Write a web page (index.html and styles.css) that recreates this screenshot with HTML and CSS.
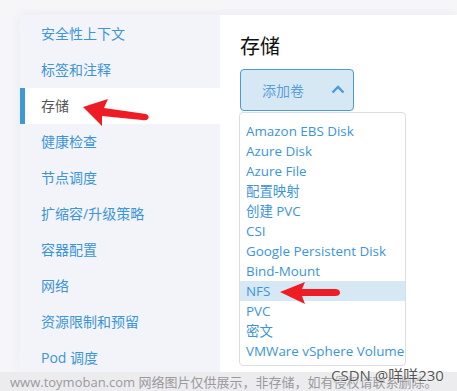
FILE: index.html
```html
<!DOCTYPE html>
<html lang="zh">
<head>
    <meta charset="UTF-8">
    <title>存储</title>
    <link rel="stylesheet" href="styles.css">
</head>
<body>
<div class="page">
    <div class="card">
        <div class="side">
            <div class="side-item">安全性上下文</div>
            <div class="side-item">标签和注释</div>
            <div class="side-item active">存储</div>
            <div class="side-item">健康检查</div>
            <div class="side-item">节点调度</div>
            <div class="side-item">扩缩容/升级策略</div>
            <div class="side-item">容器配置</div>
            <div class="side-item">网络</div>
            <div class="side-item">资源限制和预留</div>
            <div class="side-item">Pod 调度</div>
        </div>
        <div class="main">
            <h2 class="title">存储</h2>
            <button class="add-btn">
                <span>添加卷</span>
                <svg class="chevron" width="14" height="9" viewBox="0 0 14 9"><path d="M1.5 7.5 L7 2 L12.5 7.5" fill="none" stroke="#4a9bd8" stroke-width="2.4"/></svg>
            </button>
            <ul class="menu">
                <li>Amazon EBS Disk</li>
                <li>Azure Disk</li>
                <li>Azure File</li>
                <li>配置映射</li>
                <li>创建 PVC</li>
                <li>CSI</li>
                <li>Google Persistent Disk</li>
                <li>Bind-Mount</li>
                <li class="hover">NFS</li>
                <li>PVC</li>
                <li>密文</li>
                <li>VMWare vSphere Volume</li>
            </ul>
        </div>
    </div>
    <div class="footer">www.toymoban.com 网络图片仅供展示，非存储，如有侵权请联系删除。</div>
</div>

<!-- annotations over the screenshot -->
<svg class="arrow arrow-side" width="70" height="30" viewBox="0 0 70 30">
    <path d="M1 8 L26 0 L22 9 L64 15 Q68 17 66 20 Q64 22 60 21 L20 17 L20 27 Z" fill="#ee1c25"/>
</svg>
<svg class="arrow arrow-nfs" width="62" height="26" viewBox="0 0 62 26">
    <path d="M0 11 L25 1 L22 8 L55 8 Q60 8 60 11.5 Q60 15 55 15 L22 15 L25 23 Z" fill="#ee1c25"/>
</svg>
<div class="csdn">CSDN @咩咩230</div>
</body>
</html>
```

FILE: styles.css
```css
body {
    margin: 0;
    background: #f6f6f9;
    font-family: "Open Sans", "Noto Sans CJK SC", sans-serif;
    width: 457px;
    height: 391px;
    overflow: hidden;
    position: relative;
}

.page {
    padding-top: 15px;
}

.card {
    display: flex;
    height: 357px;
    margin-left: 20px;
    background: #fff;
    box-shadow: 0 0 12px rgba(30, 40, 90, 0.06);
    border-radius: 0 0 0 6px;
}

.side {
    width: 200px;
    background: #f3f4f9;
    padding-top: 1px;
    border-radius: 0 0 0 6px;
}

.side-item {
    height: 36px;
    line-height: 36px;
    padding-left: 21px;
    font-size: 14px;
    color: #3b95d8;
}

.side-item.active {
    background: #fff;
    color: #555;
    border-left: 5px solid #3d98d8;
    padding-left: 16px;
}

.main {
    flex: 1;
    padding-left: 20px;
}

.title {
    margin: 0;
    padding-top: 18px;
    height: 36px;
    font-size: 20px;
    font-weight: 400;
    line-height: 28px;
    color: #111;
}

.add-btn {
    display: flex;
    align-items: center;
    justify-content: space-between;
    width: 114px;
    height: 42px;
    padding: 0 8px 0 21px;
    background: #d7e8f5;
    border: 1px solid #4a9bd8;
    border-radius: 4px;
    font-family: inherit;
    font-size: 14px;
    color: #5a9fd8;
}

.chevron {
    margin-bottom: 2px;
}

.menu {
    list-style: none;
    margin: 1px 0 0 -1px;
    padding: 8px 0 4px;
    width: 165px;
    border: 1px solid #dcdce8;
    border-radius: 4px;
    background: #fff;
}

.menu li {
    height: 20px;
    line-height: 21px;
    padding-left: 6px;
    font-size: 13.4px;
    color: #3b95d8;
    white-space: nowrap;
}

.menu li.hover {
    background: #d7e8f5;
}

.footer {
    height: 19px;
    line-height: 20px;
    background: #ececee;
    padding-left: 10px;
    font-size: 13px;
    color: #9a9a9e;
    white-space: nowrap;
}

.arrow {
    position: absolute;
}

.arrow-side {
    left: 82px;
    top: 99px;
}

.arrow-nfs {
    left: 280px;
    top: 281px;
}

.csdn {
    position: absolute;
    left: 331px;
    top: 364px;
    font-size: 15px;
    color: #555;
    text-shadow: 0 0 2px #fff, 0 0 2px #fff;
}
```
